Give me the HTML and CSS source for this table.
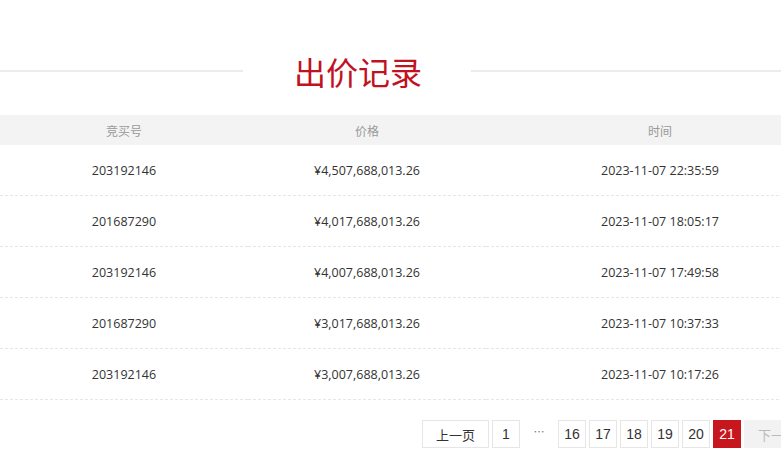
FILE: index.html
```html
<!DOCTYPE html>
<html lang="zh-CN">
<head>
<meta charset="utf-8">
<title>出价记录</title>
<link rel="stylesheet" href="styles.css">
</head>
<body>
<div class="page">
  <div class="title-row">
    <span class="line"></span>
    <h2 class="title">出价记录</h2>
    <span class="line"></span>
  </div>
  <table class="records">
    <colgroup>
      <col class="c1"><col class="c2"><col class="c3">
    </colgroup>
    <thead>
      <tr><th>竞买号</th><th>价格</th><th>时间</th></tr>
    </thead>
    <tbody>
      <tr><td>203192146</td><td>¥4,507,688,013.26</td><td>2023-11-07 22:35:59</td></tr>
      <tr><td>201687290</td><td>¥4,017,688,013.26</td><td>2023-11-07 18:05:17</td></tr>
      <tr><td>203192146</td><td>¥4,007,688,013.26</td><td>2023-11-07 17:49:58</td></tr>
      <tr><td>201687290</td><td>¥3,017,688,013.26</td><td>2023-11-07 10:37:33</td></tr>
      <tr><td>203192146</td><td>¥3,007,688,013.26</td><td>2023-11-07 10:17:26</td></tr>
    </tbody>
  </table>
  <div class="pager">
    <a class="pg wide">上一页</a>
    <a class="pg">1</a>
    <span class="dots">…</span>
    <a class="pg">16</a>
    <a class="pg">17</a>
    <a class="pg">18</a>
    <a class="pg">19</a>
    <a class="pg">20</a>
    <a class="pg active">21</a>
    <a class="pg wide disabled">下一页</a>
  </div>
</div>
</body>
</html>
```
FILE: styles.css
```css
html, body {
  margin: 0;
  padding: 0;
  overflow: hidden;
  background: #fff;
}
body {
  font-family: "Open Sans", "Noto Sans CJK SC", sans-serif;
  color: #333;
}
.page {
  width: 834px;
}
.title-row {
  display: grid;
  grid-template-columns: 243px auto 1fr;
  align-items: center;
  margin-top: 47px;
  height: 48px;
}
.line {
  display: block;
  height: 2px;
  background: #ececec;
}
.title {
  margin: 0;
  padding: 0 49px 0 51px;
  font-family: "Noto Sans CJK SC", sans-serif;
  font-weight: 400;
  font-size: 32px;
  line-height: 48px;
  color: #c1121f;
  letter-spacing: 0;
}
.records {
  width: 834px;
  margin-top: 20px;
  border-collapse: collapse;
  table-layout: fixed;
}
.c1 { width: 248px; }
.c2 { width: 238px; }
.c3 { width: 348px; }
.records th {
  height: 30px;
  padding: 0;
  background: #f3f3f3;
  font-family: "Noto Sans CJK SC", sans-serif;
  font-weight: 400;
  font-size: 12px;
  color: #999;
  text-align: center;
}
.records td {
  height: 50px;
  padding: 0;
  border-bottom: 1px dashed #e6e6e6;
  font-size: 12.5px;
  color: #333;
  text-align: center;
}
.pager {
  display: flex;
  justify-content: flex-end;
  gap: 3px;
  margin-top: 20px;
  padding-right: 23px;
}
.pg {
  box-sizing: border-box;
  width: 28px;
  height: 28px;
  border: 1px solid #e6e6e6;
  display: flex;
  align-items: center;
  justify-content: center;
  font-family: "Liberation Sans", "Noto Sans CJK SC", sans-serif;
  font-size: 14px;
  color: #333;
  background: #fff;
}
.pg.wide {
  width: 67px;
  font-family: "Noto Sans CJK SC", sans-serif;
  font-size: 13px;
}
.pg.active {
  background: #c8161e;
  border-color: #c8161e;
  color: #fff;
}
.pg.disabled {
  background: #f2f2f2;
  border-color: #f2f2f2;
  color: #bbb;
}
.dots {
  width: 32px;
  height: 28px;
  display: flex;
  align-items: center;
  justify-content: center;
  font-family: "Noto Sans CJK SC", sans-serif;
  font-size: 11px;
  color: #777;
  padding-bottom: 6px;
  box-sizing: border-box;
}
```
